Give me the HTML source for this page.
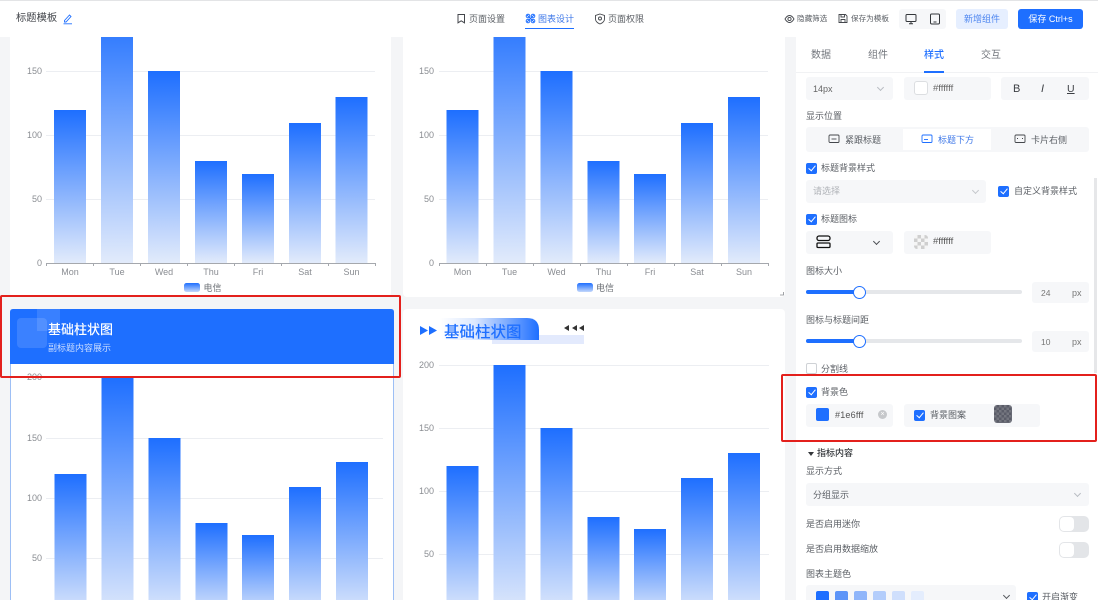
<!DOCTYPE html>
<html lang="zh-CN"><head><meta charset="utf-8"><title>标题模板</title>
<style>
*{box-sizing:border-box}
html,body{margin:0;padding:0;width:1098px;height:600px;overflow:hidden;background:#f4f5f7}
#w{position:absolute;left:0;top:0;width:1098px;height:600px;overflow:hidden;background:#f4f5f7;font-family:"Liberation Sans","Noto Sans CJK SC",sans-serif;color:#555;filter:blur(.3px)}
.a{position:absolute;white-space:nowrap}
.t{position:absolute;white-space:nowrap;line-height:14px;font-size:9px;color:#5c6066}
.box{position:absolute;background:#f6f7f9;border-radius:3px}
.card{position:absolute;background:#fff;border-radius:4px}
.cb{position:absolute;width:11px;height:11px;background:#1e6fff;border-radius:2px}
.cb:after{content:"";position:absolute;left:3.6px;top:1.4px;width:3.4px;height:6px;border:solid #fff;border-width:0 1.2px 1.2px 0;transform:rotate(40deg)}
.cb.off{background:#fff;border:1px solid #cfd2d6}
.cb.off:after{display:none}
.red{position:absolute;border:2px solid #e3201c;border-radius:2px}
.track{position:absolute;left:806px;width:216px;height:4px;background:#e5e7ea;border-radius:2px}
.fill{position:absolute;left:806px;width:53px;height:4px;background:#1e6fff;border-radius:2px}
.thumb{position:absolute;left:853px;width:13px;height:13px;background:#fff;border:1.5px solid #1e6fff;border-radius:50%}
.sw{position:absolute;width:30px;height:16px;background:#e3e5e8;border-radius:5px}
.sw:after{content:"";position:absolute;left:1px;top:1px;width:14px;height:14px;background:#fff;border-radius:4px}
.chev{position:absolute;width:5px;height:5px;border:solid #b8bcc2;border-width:0 1px 1px 0;transform:rotate(45deg)}
svg text{font-family:"Liberation Sans","Noto Sans CJK SC",sans-serif}
</style></head><body><div id="w">

<!-- Chart cards -->
<div class="card" style="left:10px;top:30px;width:381px;height:267px"></div>
<div class="card" style="left:403px;top:30px;width:382px;height:267px"></div>
<div class="card" style="left:403px;top:309px;width:382px;height:291px;border-radius:4px 4px 0 0"></div>
<div class="card" style="left:10px;top:309px;width:384px;height:296px;border:1px solid #9dbff5"></div>

<svg class="a" style="left:0;top:0" width="795" height="600" viewBox="0 0 795 600">
<defs>
<linearGradient id="g" x1="0" y1="0" x2="0" y2="1"><stop offset="0" stop-color="#1e6fff"/><stop offset="1" stop-color="#e2ebfb"/></linearGradient>
<linearGradient id="lg" x1="0" y1="0" x2="0" y2="1"><stop offset="0" stop-color="#1e6fff"/><stop offset="1" stop-color="#c3d7fb"/></linearGradient>
<linearGradient id="tb" x1="0" y1="0" x2="1" y2="0"><stop offset="0" stop-color="#fff"/><stop offset=".35" stop-color="#dce8fe"/><stop offset="1" stop-color="#1e6fff"/></linearGradient>
</defs>

<!-- Chart 1 -->
<g stroke="#eceef2" stroke-width="1"><line x1="46" x2="375" y1="71.5" y2="71.5"/><line x1="46" x2="375" y1="135.5" y2="135.5"/><line x1="46" x2="375" y1="199.5" y2="199.5"/></g>
<g fill="url(#g)">
<rect x="54" y="110" width="32" height="153"/><rect x="101" y="7" width="32" height="256"/><rect x="148" y="71" width="32" height="192"/><rect x="195" y="161" width="32" height="102"/><rect x="242" y="174" width="32" height="89"/><rect x="289" y="123" width="32" height="140"/><rect x="335.500" y="97" width="32" height="166"/>
</g>
<path d="M46.500 266V263.500H375.500V266M93.500 263.500V266M140.500 263.500V266M187.500 263.500V266M234.500 263.500V266M281.500 263.500V266M328.500 263.500V266" fill="none" stroke="#a5a8ad"/>
<g font-size="9" fill="#8a8d92" text-anchor="end"><text x="42" y="74">150</text><text x="42" y="138">100</text><text x="42" y="202">50</text><text x="42" y="266">0</text></g>
<g font-size="9" fill="#8a8d92" text-anchor="middle"><text x="70" y="275">Mon</text><text x="117" y="275">Tue</text><text x="164" y="275">Wed</text><text x="211" y="275">Thu</text><text x="258" y="275">Fri</text><text x="305" y="275">Sat</text><text x="351.500" y="275">Sun</text></g>
<rect x="184" y="283" width="16" height="9" rx="2.500" fill="url(#lg)"/><text x="203.500" y="291" font-size="9" fill="#6c7076">电信</text>

<!-- Chart 2 -->
<g stroke="#eceef2" stroke-width="1"><line x1="439" x2="768" y1="71.5" y2="71.5"/><line x1="439" x2="768" y1="135.5" y2="135.5"/><line x1="439" x2="768" y1="199.5" y2="199.5"/></g>
<g fill="url(#g)">
<rect x="446.500" y="110" width="32" height="153"/><rect x="493.500" y="7" width="32" height="256"/><rect x="540.500" y="71" width="32" height="192"/><rect x="587.500" y="161" width="32" height="102"/><rect x="634" y="174" width="32" height="89"/><rect x="681" y="123" width="32" height="140"/><rect x="728" y="97" width="32" height="166"/>
</g>
<path d="M439.500 266V263.500H768.500V266M486.500 263.500V266M533.500 263.500V266M580.500 263.500V266M627.500 263.500V266M674.500 263.500V266M721.500 263.500V266" fill="none" stroke="#a5a8ad"/>
<g font-size="9" fill="#8a8d92" text-anchor="end"><text x="434" y="74">150</text><text x="434" y="138">100</text><text x="434" y="202">50</text><text x="434" y="266">0</text></g>
<g font-size="9" fill="#8a8d92" text-anchor="middle"><text x="462.500" y="275">Mon</text><text x="509.500" y="275">Tue</text><text x="556.500" y="275">Wed</text><text x="603.500" y="275">Thu</text><text x="650" y="275">Fri</text><text x="697" y="275">Sat</text><text x="744" y="275">Sun</text></g>
<rect x="577" y="283" width="16" height="9" rx="2.500" fill="url(#lg)"/><text x="596" y="291" font-size="9" fill="#6c7076">电信</text>
<path d="M780 295H783.500V292" fill="none" stroke="#8a8d92" stroke-width=".8"/>

<!-- Chart 3 -->
<g stroke="#eceef2" stroke-width="1"><line x1="46" x2="383" y1="377.5" y2="377.5"/><line x1="46" x2="383" y1="438.5" y2="438.5"/><line x1="46" x2="383" y1="498.5" y2="498.5"/><line x1="46" x2="383" y1="558.5" y2="558.5"/></g>
<g fill="url(#g)">
<rect x="54.500" y="474" width="32" height="145"/><rect x="101.500" y="377" width="32" height="242"/><rect x="148.500" y="438" width="32" height="181"/><rect x="195.500" y="523" width="32" height="96"/><rect x="242" y="535" width="32" height="84"/><rect x="289" y="487" width="32" height="132"/><rect x="336" y="462" width="32" height="157"/>
</g>
<g font-size="9" fill="#8a8d92" text-anchor="end"><text x="42" y="380">200</text><text x="42" y="441">150</text><text x="42" y="501">100</text><text x="42" y="561">50</text></g>

<!-- Chart 4 -->
<g stroke="#eceef2" stroke-width="1"><line x1="439" x2="769" y1="365.5" y2="365.5"/><line x1="439" x2="769" y1="428.5" y2="428.5"/><line x1="439" x2="769" y1="491.5" y2="491.5"/><line x1="439" x2="769" y1="554.5" y2="554.5"/></g>
<g fill="url(#g)">
<rect x="446.500" y="466" width="32" height="151"/><rect x="493.500" y="365" width="32" height="252"/><rect x="540.500" y="428" width="32" height="189"/><rect x="587.500" y="517" width="32" height="100"/><rect x="634" y="529" width="32" height="88"/><rect x="681" y="478" width="32" height="139"/><rect x="728" y="453" width="32" height="164"/>
</g>
<g font-size="9" fill="#8a8d92" text-anchor="end"><text x="434" y="368">200</text><text x="434" y="431">150</text><text x="434" y="494">100</text><text x="434" y="557">50</text></g>

<!-- Chart 4 title decoration -->
<rect x="492" y="335" width="92" height="9" fill="#e3eafd"/>
<path d="M440 318H527Q539 318 539 330V340H440Z" fill="url(#tb)"/>
<path d="M420 326L428 330.500L420 335ZM429 326L437 330.500L429 335Z" fill="#1e6fff"/>
<path d="M569 325V331L564 328ZM577 325V331L572 328ZM584 325V331L579 328Z" fill="#333"/>
<text x="444" y="337" font-size="15.500" font-weight="500" fill="#1e6fff">基础柱状图</text>

<!-- Chart 3 header -->
<path d="M10 364V312Q10 309 13 309H391Q394 309 394 312V364Z" fill="#1e6fff"/>
<rect x="37" y="309" width="23" height="22" fill="#fff" opacity=".12"/>
<rect x="17" y="318" width="30" height="30" rx="4" fill="#fff" opacity=".13"/>
<text x="48" y="334" font-size="13" font-weight="500" fill="#fff">基础柱状图</text>
<text x="48" y="351" font-size="9" fill="#c9dcff">副标题内容展示</text>
</svg>

<!-- Header -->
<div class="a" style="left:0;top:0;width:1098px;height:37px;background:#fff;border-top:1px solid #e3e4e6"></div>
<div class="t" style="left:16px;top:12px;font-size:10.300px;color:#44474c">标题模板</div>
<svg class="a" style="left:62px;top:13px" width="11" height="12" viewBox="0 0 11 12" fill="none" stroke="#1e6fff" stroke-width=".9"><path d="M2.500 7.500L7.500 2L9 3.500L4 9H2.500ZM1.500 10.800H10"/></svg>

<svg class="a" style="left:456px;top:13px" width="11" height="12" viewBox="0 0 11 12" fill="none" stroke="#44474c" stroke-width="1"><path d="M2 1.500H8.500V9.800L5.200 7.800L2 9.800Z"/></svg>
<div class="t" style="left:469px;top:12px;color:#5c6066">页面设置</div>
<svg class="a" style="left:525px;top:13px" width="11" height="12" viewBox="0 0 11 12" fill="none" stroke="#1e6fff" stroke-width="1"><path d="M2 2L9 9M9 2L2 9"/><circle cx="3" cy="3" r="1.800"/><circle cx="8" cy="3" r="1.800"/><circle cx="3" cy="8" r="1.800"/><circle cx="8" cy="8" r="1.800"/></svg>
<div class="t" style="left:538px;top:12px;color:#3f78e8">图表设计</div>
<div class="a" style="left:525px;top:28px;width:49px;height:1px;background:#1e6fff"></div>
<svg class="a" style="left:594px;top:13px" width="12" height="12" viewBox="0 0 12 12" fill="none" stroke="#44474c" stroke-width=".9"><path d="M6 1L10.500 2.500V6C10.500 8.500 8.500 10 6 11C3.500 10 1.500 8.500 1.500 6V2.500Z"/><circle cx="6" cy="5.500" r="1.500"/></svg>
<div class="t" style="left:608px;top:12px;color:#5c6066">页面权限</div>

<svg class="a" style="left:784px;top:14px" width="11" height="10" viewBox="0 0 11 10" fill="none" stroke="#44474c" stroke-width=".9"><path d="M1 5C2.500 2.500 4 1.500 5.500 1.500S8.500 2.500 10 5C8.500 7.500 7 8.500 5.500 8.500S2.500 7.500 1 5Z"/><circle cx="5.500" cy="5" r="1.600"/></svg>
<div class="t" style="left:797px;top:12px;font-size:7.600px;color:#5c6066">隐藏筛选</div>
<svg class="a" style="left:838px;top:13px" width="10" height="11" viewBox="0 0 10 11" fill="none" stroke="#44474c" stroke-width=".9"><path d="M1 1.500H7.500L9 3V9.500H1ZM3 1.500V4H6.500V1.500M3 9.500V6.500H7V9.500"/></svg>
<div class="t" style="left:851px;top:12px;font-size:7.600px;color:#5c6066">保存为模板</div>

<div class="box" style="left:899px;top:9px;width:47px;height:20px"></div>
<svg class="a" style="left:905px;top:13px" width="12" height="12" viewBox="0 0 12 12" fill="none" stroke="#33363a" stroke-width="1"><rect x="1" y="1.500" width="10" height="7" rx="1"/><path d="M4 10.800H8M6 8.500V10.800"/></svg>
<svg class="a" style="left:929px;top:13px" width="12" height="12" viewBox="0 0 12 12" fill="none" stroke="#33363a" stroke-width="1"><rect x="1.500" y="1" width="9" height="10" rx="1.200"/><path d="M4.500 9H7.500"/></svg>

<div class="a" style="left:956px;top:9px;width:52px;height:20px;background:#e6efff;border-radius:3px;color:#4d86f0;font-size:9px;line-height:20px;text-align:center">新增组件</div>
<div class="a" style="left:1018px;top:9px;width:65px;height:20px;background:#1e6fff;border-radius:3px;color:#fff;font-size:9px;line-height:20px;text-align:center">保存 Ctrl+s</div>

<!-- Right panel -->
<div class="a" style="left:796px;top:37px;width:302px;height:563px;background:#fff"></div>
<div class="a" style="left:796px;top:72px;width:302px;height:1px;background:#f1f2f4"></div>
<div class="a" style="left:1094px;top:178px;width:3px;height:195px;background:#e6e7e9"></div>
<div class="t" style="left:811px;top:49px;font-size:10px;color:#72767c">数据</div>
<div class="t" style="left:868px;top:49px;font-size:10px;color:#72767c">组件</div>
<div class="t" style="left:924px;top:49px;font-size:10px;color:#1e6fff;font-weight:500">样式</div>
<div class="t" style="left:981px;top:49px;font-size:10px;color:#72767c">交互</div>
<div class="a" style="left:924px;top:71px;width:20px;height:1.500px;background:#1e6fff"></div>

<div class="box" style="left:806px;top:77px;width:87px;height:23px"></div>
<div class="t" style="left:813px;top:82px;font-size:9px;color:#666">14px</div>
<div class="chev" style="left:878px;top:85px"></div>
<div class="box" style="left:904px;top:77px;width:87px;height:23px"></div>
<div class="a" style="left:914px;top:81px;width:14px;height:14px;background:#fff;border:1px solid #dcdee1;border-radius:3px"></div>
<div class="t" style="left:933px;top:82px;font-size:9.500px;color:#666">#ffffff</div>
<div class="box" style="left:1001px;top:77px;width:88px;height:23px"></div>
<div class="t" style="left:1013px;top:82px;font-size:11px;color:#3c3f44">B</div>
<div class="t" style="left:1041px;top:82px;font-size:11px;color:#3c3f44;font-style:italic">I</div>
<div class="t" style="left:1067px;top:82px;font-size:10.500px;color:#3c3f44;text-decoration:underline">U</div>

<div class="t" style="left:806px;top:109px">显示位置</div>
<div class="box" style="left:806px;top:127px;width:283px;height:25px"></div>
<div class="a" style="left:903px;top:129px;width:88px;height:21px;background:#fff"></div>
<svg class="a" style="left:828px;top:134px" width="12" height="10" viewBox="0 0 12 10" fill="none" stroke="#44474c" stroke-width=".9"><rect x="1" y="1" width="10" height="7.500" rx="1"/><path d="M3.500 5H8.500"/></svg>
<div class="t" style="left:845px;top:133px">紧跟标题</div>
<svg class="a" style="left:921px;top:134px" width="12" height="10" viewBox="0 0 12 10" fill="none" stroke="#1e6fff" stroke-width=".9"><rect x="1" y="1" width="10" height="7.500" rx="1"/><path d="M3 5.500H7"/></svg>
<div class="t" style="left:938px;top:133px;color:#3f78e8">标题下方</div>
<svg class="a" style="left:1014px;top:134px" width="12" height="10" viewBox="0 0 12 10" fill="none" stroke="#44474c" stroke-width=".9"><rect x="1" y="1" width="10" height="7.500" rx="1"/><path d="M3 4.500H4M8 4.500H9"/></svg>
<div class="t" style="left:1031px;top:133px">卡片右侧</div>

<div class="cb" style="left:806px;top:163px"></div>
<div class="t" style="left:821px;top:161px">标题背景样式</div>
<div class="box" style="left:806px;top:180px;width:180px;height:23px"></div>
<div class="t" style="left:813px;top:184px;color:#b0b3b8">请选择</div>
<div class="chev" style="left:973px;top:188px;border-color:#c5c8cc"></div>
<div class="cb" style="left:998px;top:186px"></div>
<div class="t" style="left:1014px;top:184px">自定义背景样式</div>

<div class="cb" style="left:806px;top:214px"></div>
<div class="t" style="left:821px;top:212px">标题图标</div>
<div class="box" style="left:806px;top:231px;width:87px;height:23px"></div>
<svg class="a" style="left:815px;top:235px" width="17" height="14" viewBox="0 0 17 14" fill="none" stroke="#111" stroke-width="1.300"><rect x="2" y="1" width="13" height="4.500" rx="2"/><rect x="2" y="8" width="13" height="4.500" rx="1"/></svg>
<div class="chev" style="left:874px;top:239px;border-color:#4b4e53"></div>
<div class="box" style="left:904px;top:231px;width:87px;height:23px"></div>
<div class="a" style="left:914px;top:235px;width:14px;height:14px;border-radius:3px;background:repeating-conic-gradient(#cfcfcf 0 25%,#f5f5f5 0 50%) 0 0/7px 7px"></div>
<div class="t" style="left:933px;top:235px;font-size:9.500px;color:#555">#ffffff</div>

<div class="t" style="left:806px;top:264px">图标大小</div>
<div class="track" style="top:290px"></div><div class="fill" style="top:290px"></div><div class="thumb" style="top:286px"></div>
<div class="box" style="left:1032px;top:282px;width:57px;height:21px"></div>
<div class="t" style="left:1041px;top:286px;font-size:8.500px;color:#777">24</div>
<div class="t" style="left:1072px;top:286px;font-size:9px;color:#777">px</div>

<div class="t" style="left:806px;top:313px">图标与标题间距</div>
<div class="track" style="top:339px"></div><div class="fill" style="top:339px"></div><div class="thumb" style="top:335px"></div>
<div class="box" style="left:1032px;top:331px;width:57px;height:21px"></div>
<div class="t" style="left:1041px;top:335px;font-size:8.500px;color:#777">10</div>
<div class="t" style="left:1072px;top:335px;font-size:9px;color:#777">px</div>

<div class="cb off" style="left:806px;top:363px"></div>
<div class="t" style="left:821px;top:362px">分割线</div>

<div class="cb" style="left:806px;top:387px"></div>
<div class="t" style="left:821px;top:385px">背景色</div>
<div class="box" style="left:806px;top:404px;width:87px;height:23px"></div>
<div class="a" style="left:816px;top:408px;width:13px;height:13px;background:#1e6fff;border-radius:2px"></div>
<div class="t" style="left:835px;top:408px;font-size:9px;color:#555;letter-spacing:.2px">#1e6fff</div>
<div class="a" style="left:878px;top:410px;width:9px;height:9px;background:#c6c8cb;border-radius:50%;color:#fff;font-size:7px;line-height:9px;text-align:center">×</div>
<div class="box" style="left:904px;top:404px;width:136px;height:23px"></div>
<div class="cb" style="left:914px;top:410px"></div>
<div class="t" style="left:930px;top:408px">背景图案</div>
<div class="a" style="left:994px;top:405px;width:18px;height:18px;border-radius:3px;background:repeating-conic-gradient(#5a5c68 0 25%,#74767f 0 50%) 0 0/5px 5px"></div>

<div class="red" style="left:781px;top:374px;width:316px;height:68px"></div>
<div class="red" style="left:0;top:295px;width:401px;height:83px"></div>

<div class="a" style="left:807.500px;top:452px;width:0;height:0;border:3px solid transparent;border-top:4px solid #33363a"></div>
<div class="t" style="left:817px;top:446px;color:#33363a;font-weight:500">指标内容</div>
<div class="t" style="left:806px;top:464px">显示方式</div>
<div class="box" style="left:806px;top:483px;width:283px;height:23px"></div>
<div class="t" style="left:813px;top:488px">分组显示</div>
<div class="chev" style="left:1075px;top:491px"></div>

<div class="t" style="left:806px;top:517px">是否启用迷你</div>
<div class="sw" style="left:1059px;top:516px"></div>
<div class="t" style="left:806px;top:542px">是否启用数据缩放</div>
<div class="sw" style="left:1059px;top:542px"></div>
<div class="t" style="left:806px;top:567px">图表主题色</div>

<div class="box" style="left:806px;top:585px;width:210px;height:20px"></div>
<div class="a" style="left:816px;top:591px;width:13px;height:13px;background:#1e6fff;border-radius:2px"></div>
<div class="a" style="left:835px;top:591px;width:13px;height:13px;background:#5c94f8;border-radius:2px"></div>
<div class="a" style="left:854px;top:591px;width:13px;height:13px;background:#8fb5fa;border-radius:2px"></div>
<div class="a" style="left:873px;top:591px;width:13px;height:13px;background:#b3cdfb;border-radius:2px"></div>
<div class="a" style="left:892px;top:591px;width:13px;height:13px;background:#cfdffc;border-radius:2px"></div>
<div class="a" style="left:911px;top:591px;width:13px;height:13px;background:#e4edfd;border-radius:2px"></div>
<div class="chev" style="left:1004px;top:593px;border-color:#55585d"></div>
<div class="cb" style="left:1027px;top:592px"></div>
<div class="t" style="left:1042px;top:590px">开启渐变</div>

</div></body></html>
